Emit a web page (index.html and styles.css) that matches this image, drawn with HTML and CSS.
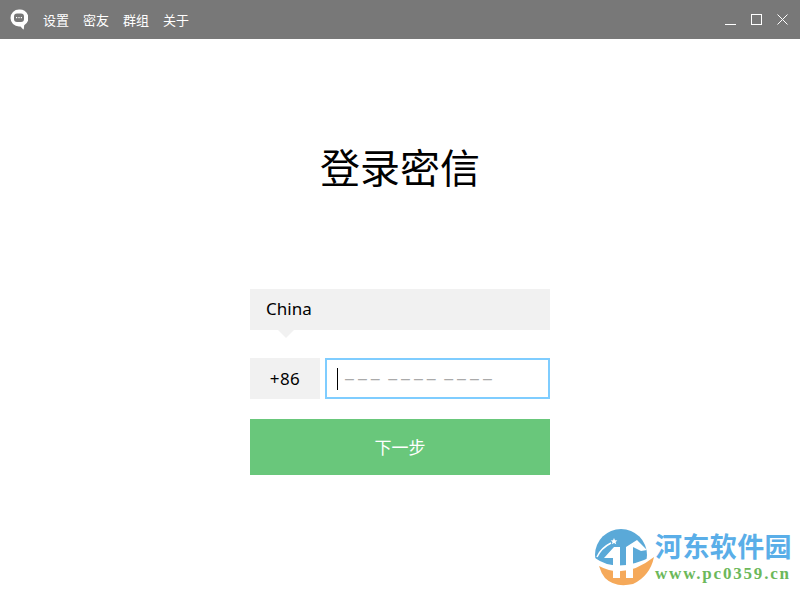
FILE: index.html
```html
<!DOCTYPE html>
<html lang="zh-CN">
  <head>
    <meta charset="UTF-8" />
    <title>登录密信</title>
    <link rel="stylesheet" href="styles.css">
  </head>
  <body>
    <div class="titlebar">
      <svg class="logo" width="18" height="21" viewBox="0 0 18 21">
        <path d="M9 0.500a8.500 8.500 0 0 0 0 17h1.500l2.500 2.800c.3.3.7.2.8-.2l.4-3.800A8.500 8.500 0 0 0 9 .5z" fill="#fff"/>
        <rect x="4" y="4.500" width="10" height="8.500" rx="3" fill="#787878"/>
        <rect x="6" y="8" width="1.200" height="1.200" fill="#fff"/>
        <rect x="8.400" y="8" width="1.200" height="1.200" fill="#fff"/>
        <rect x="10.800" y="8" width="1.200" height="1.200" fill="#fff"/>
      </svg>
      <a class="menu-item">设置</a>
      <a class="menu-item">密友</a>
      <a class="menu-item">群组</a>
      <a class="menu-item">关于</a>
      <div class="window-buttons">
        <svg width="11" height="11" viewBox="0 0 11 11"><path d="M0 10.500h11" stroke="#fff" fill="none"/></svg>
        <svg width="11" height="11" viewBox="0 0 11 11"><rect x="0.500" y="0.500" width="10" height="10" stroke="#fff" fill="none"/></svg>
        <svg width="11" height="11" viewBox="0 0 11 11"><path d="M0.500 0.500l10 10M10.500 0.500l-10 10" stroke="#fff" fill="none"/></svg>
      </div>
    </div>

    <h1>登录密信</h1>

    <form class="login-form">
      <div class="country">China</div>
      <div class="phone-row">
        <div class="area-code">+86</div>
        <div class="phone-input">
          <span class="caret"></span>
          <span class="placeholder">––– –––– ––––</span>
        </div>
      </div>
      <button type="button" class="next-button">下一步</button>
    </form>

    <div class="watermark">
      <svg width="60" height="58" viewBox="0 0 60 58">
        <circle cx="26" cy="27" r="26" fill="#5aa9d8"/>
        <path d="M0 30Q22 46 58 28V58H0z" fill="#fff"/>
        <path d="M4 38Q30 52 59 29Q55 48 38 56Q20 60 10 50Q6 45 4 38z" fill="#f5a95a"/>
        <path d="M9 30L19 19H25V50H18V30z" fill="#fff"/>
        <path d="M31 19L42 12L52 22L46 23L38 19V50H31z" fill="#fff"/>
        <path d="M2 29Q6 20 16 15" stroke="#fff" stroke-width="1.500" fill="none"/>
        <path d="M19 10l1 2.200 2.400.2-1.800 1.600.6 2.300-2.200-1.200-2.100 1.200.6-2.300-1.800-1.600 2.300-.2z" fill="#fff"/>
      </svg>
      <div class="watermark-text">
        <div class="watermark-name">河东软件园</div>
        <div class="watermark-url">www.pc0359.cn</div>
      </div>
    </div>
  </body>
</html>
```

FILE: styles.css
```css
body {
  font-family: "Noto Sans", "Noto Sans CJK SC", sans-serif;
  margin: 0;
  padding: 0;
  width: 800px;
  height: 600px;
  overflow: hidden;
  position: relative;
  background-color: #fff;
}

.titlebar {
  display: flex;
  align-items: center;
  height: 39px;
  padding: 0 12px 0 10px;
  box-sizing: border-box;
  background-color: #787878;
}

.logo {
  margin-right: 15px;
}

.menu-item {
  font-size: 13px;
  color: #fff;
  margin-right: 14px;
}

.window-buttons {
  display: flex;
  gap: 15px;
  margin-left: auto;
}

h1 {
  font-size: 40px;
  font-weight: normal;
  line-height: 56px;
  color: #000;
  text-align: center;
  margin: 101px 0 93px;
}

.login-form {
  display: flex;
  flex-direction: column;
  width: 300px;
  margin: 0 auto;
}

.country {
  position: relative;
  height: 41px;
  line-height: 40px;
  padding-left: 16px;
  font-size: 17px;
  color: #000;
  background-color: #f1f1f1;
}

.country::after {
  content: "";
  position: absolute;
  left: 28px;
  top: 41px;
  border-left: 8px solid transparent;
  border-right: 8px solid transparent;
  border-top: 8px solid #f1f1f1;
}

.phone-row {
  display: flex;
  gap: 5px;
  margin-top: 28px;
}

.area-code {
  width: 70px;
  height: 41px;
  line-height: 41px;
  text-align: center;
  font-size: 17px;
  letter-spacing: 0.5px;
  color: #000;
  background-color: #f1f1f1;
}

.phone-input {
  display: flex;
  align-items: center;
  flex: 1;
  height: 41px;
  box-sizing: border-box;
  padding-left: 10px;
  border: 2px solid #7fcdff;
}

.caret {
  width: 1px;
  height: 22px;
  margin-right: 7px;
  background-color: #000;
}

.placeholder {
  font-family: "Liberation Sans", sans-serif;
  font-size: 16px;
  letter-spacing: 4px;
  word-spacing: -4px;
  color: #aaa;
}

.next-button {
  height: 56px;
  margin-top: 20px;
  border: none;
  padding: 0 0 2px;
  font-family: inherit;
  font-size: 17px;
  color: #fff;
  background-color: #69c77b;
}

/* site stamp sits on top of the page corner */
.watermark {
  position: absolute;
  left: 595px;
  top: 528px;
  display: flex;
}

.watermark-name {
  font-family: "Noto Sans CJK SC", sans-serif;
  font-size: 27px;
  font-weight: bold;
  line-height: 36px;
  letter-spacing: 0.4px;
  color: #5aaee8;
}

.watermark-url {
  font-family: "Liberation Serif", serif;
  font-size: 17px;
  font-weight: bold;
  line-height: 20px;
  letter-spacing: 1.8px;
  color: #6cb85a;
}
```
